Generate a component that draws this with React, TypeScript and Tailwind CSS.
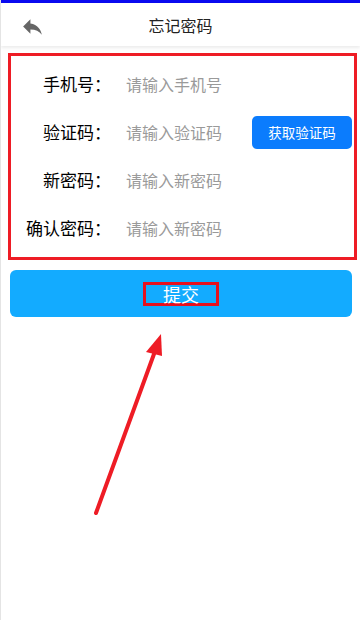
import React from 'react';

const fields = [
  { label: '手机号：', placeholder: '请输入手机号' },
  { label: '验证码：', placeholder: '请输入验证码', code: true },
  { label: '新密码：', placeholder: '请输入新密码' },
  { label: '确认密码：', placeholder: '请输入新密码' },
];

export default function App() {
  return (
    <div
      className="relative w-[360px] h-[620px] bg-white overflow-hidden border-l border-[#e4e4e4]"
      style={{ fontFamily: '"Noto Sans CJK SC", "Noto Sans", sans-serif' }}
    >
      <div className="h-[3px] bg-[#0a0af0]" />

      {/* header */}
      <div className="relative h-[43px] flex items-center justify-center bg-white shadow-[0_2px_3px_rgba(0,0,0,0.08)]">
        <button className="absolute left-[19px] top-[11px] text-[#666]">
          <svg width="25" height="25" viewBox="0 0 24 24" fill="currentColor">
            <path d="M10 9V5l-7 7 7 7v-4.1c5 0 8.5 1.6 11 5.1-1-5-4-10-11-11z" />
          </svg>
        </button>
        <h1 className="text-[16px] text-[#222] leading-none">忘记密码</h1>
      </div>

      {/* form */}
      <div className="ml-[7px] mr-[3px] mt-[7px] border-[3.5px] border-[#ee1c25] pt-[4px] pb-[5px]">
        {fields.map((f) => (
          <div key={f.label} className="h-12 flex items-center">
            <span className="w-[100px] text-right text-[17px] text-black shrink-0">{f.label}</span>
            <input
              className="ml-[15px] w-[110px] text-[16px] text-[#333] placeholder:text-[#9a9a9a] outline-none bg-transparent"
              placeholder={f.placeholder}
            />
            {f.code && (
              <button className="ml-auto mr-[2px] w-[100px] h-[33px] rounded-[5px] bg-[#0b7cfd] text-white text-[13.5px]">
                获取验证码
              </button>
            )}
          </div>
        ))}
      </div>

      {/* submit */}
      <button className="mt-[10px] ml-[9px] w-[342px] h-[47px] rounded-[6px] bg-[#13abff] flex items-center justify-center">
        <span className="w-[76px] h-[24px] border-[3px] border-[#e8101e] flex items-center justify-center text-white text-[18px] leading-none">
          提交
        </span>
      </button>

      {/* annotation arrow */}
      <svg className="absolute left-0 top-0 pointer-events-none" width="360" height="620">
        <line x1="95" y1="513" x2="153" y2="354" stroke="#ee1c25" strokeWidth="4" strokeLinecap="round" />
        <polygon points="160,334 145,352 161,356" fill="#ee1c25" />
      </svg>
    </div>
  );
}
